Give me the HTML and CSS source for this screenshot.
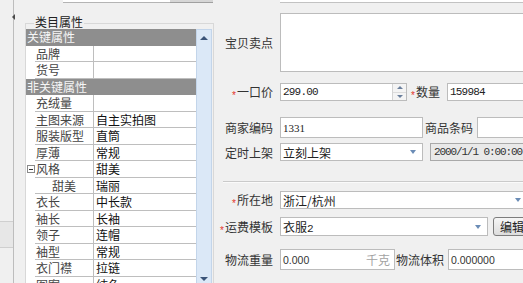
FILE: index.html
```html
<!DOCTYPE html>
<html lang="zh-CN">
<head>
<meta charset="utf-8">
<title>类目属性</title>
<link rel="stylesheet" href="styles.css">
</head>
<body>
<div class="app">
  <div class="left">
    <div class="strip">
      <span class="splitter-arrow"></span>
      <div class="strip-cell"></div>
    </div>
    <div class="leftmain">
      <div class="topbox"><div class="tb-a"></div><div class="tb-b"></div></div>
      <div class="group">
        <div class="legend">类目属性</div>
        <div class="grid">
          <div class="rows">
            <div class="row head">关键属性</div>
            <div class="row"><span class="ind"></span><span class="name">品牌</span><span class="val"></span></div>
            <div class="row"><span class="ind"></span><span class="name">货号</span><span class="val"></span></div>
            <div class="row head">非关键属性</div>
            <div class="row"><span class="ind"></span><span class="name">充绒量</span><span class="val"></span></div>
            <div class="row"><span class="ind"></span><span class="name">主图来源</span><span class="val">自主实拍图</span></div>
            <div class="row"><span class="ind"></span><span class="name">服装版型</span><span class="val">直筒</span></div>
            <div class="row"><span class="ind"></span><span class="name">厚薄</span><span class="val">常规</span></div>
            <div class="row"><span class="ind"><span class="toggle"></span></span><span class="name">风格</span><span class="val">甜美</span></div>
            <div class="row child"><span class="ind"></span><span class="name">甜美</span><span class="val">瑞丽</span></div>
            <div class="row"><span class="ind"></span><span class="name">衣长</span><span class="val">中长款</span></div>
            <div class="row"><span class="ind"></span><span class="name">袖长</span><span class="val">长袖</span></div>
            <div class="row"><span class="ind"></span><span class="name">领子</span><span class="val">连帽</span></div>
            <div class="row"><span class="ind"></span><span class="name">袖型</span><span class="val">常规</span></div>
            <div class="row"><span class="ind"></span><span class="name">衣门襟</span><span class="val">拉链</span></div>
            <div class="row"><span class="ind"></span><span class="name">图案</span><span class="val">纯色</span></div>
          </div>
          <div class="vscroll">
            <div class="sbtn"><span class="tri-up"></span></div>
            <div class="track"></div>
            <div class="sbtn"><span class="tri-down"></span></div>
          </div>
        </div>
      </div>
    </div>
  </div>

  <div class="form">
    <div class="f-top"></div>

    <div class="frow r-desc">
      <span class="lab">宝贝卖点</span>
      <div class="box area"></div>
    </div>

    <div class="frow r-price">
      <span class="lab"><span class="req">*</span>一口价</span>
      <div class="box num"><span class="mono">299.00</span>
        <span class="spin"><span class="spin-h"><span class="sm-up"></span></span><span class="spin-h"><span class="sm-down"></span></span></span>
      </div>
      <span class="lab2 w-qty"><span class="req">*</span>数量</span>
      <div class="box w-qtyin"><span class="mono">159984</span></div>
    </div>

    <div class="frow r-code">
      <span class="lab">商家编码</span>
      <div class="box w-code"><span class="serif">1331</span></div>
      <span class="lab2 w-bar">商品条码</span>
      <div class="box w-barin"></div>
    </div>

    <div class="frow r-time">
      <span class="lab">定时上架</span>
      <div class="box combo w-code"><span>立刻上架</span><span class="arrow"></span></div>
      <div class="box date"><span class="mono small">2000/1/1 0:00:00</span></div>
    </div>

    <div class="sep"></div>

    <div class="frow r-loc">
      <span class="lab"><span class="req">*</span>所在地</span>
      <div class="box combo w-loc"><span>浙江/杭州</span><span class="arrow"></span></div>
    </div>

    <div class="frow r-ship">
      <span class="lab"><span class="req">*</span>运费模板</span>
      <div class="box combo w-ship"><span>衣服<span class="mono">2</span></span><span class="arrow"></span></div>
      <div class="btn">编辑</div>
    </div>

    <div class="frow r-logi">
      <span class="lab">物流重量</span>
      <div class="box w-wt"><span class="sans">0.000</span><span class="unit">千克</span></div>
      <span class="lab2 w-vol">物流体积</span>
      <div class="box w-volin"><span class="sans">0.000000</span></div>
    </div>
  </div>
</div>
</body>
</html>
```

FILE: styles.css
```css
* { box-sizing: border-box; }
html, body { margin: 0; padding: 0; }
body {
  width: 523px;
  height: 283px;
  overflow: hidden;
  background: #f0f0f0;
  font-family: "Noto Sans CJK SC", "Microsoft YaHei", sans-serif;
  font-size: 12px;
  color: #333;
}
.app { display: flex; width: 640px; height: 283px; }

/* ---------- left panel ---------- */
.left { width: 216px; flex: none; display: flex; }
.strip {
  width: 14px;
  flex: none;
  border-right: 1px solid #bdbdbd;
  padding-top: 14px;
}
.splitter-arrow {
  display: block;
  width: 0; height: 0;
  margin-left: 12px;
  border-right: 3px solid #4a4a4a;
  border-top: 3px solid transparent;
  border-bottom: 3px solid transparent;
}
.strip-cell {
  margin-top: 201px;
  height: 27px;
  background: #e7e7e7;
  border-top: 1px solid #cfcfcf;
  border-bottom: 1px solid #cfcfcf;
}
.leftmain { flex: 1; padding-left: 11px; }
.topbox { display: flex; margin-left: 38px; width: 150px; height: 3px; }
.tb-a { flex: 1; background: #fff; border-bottom: 1px solid #b4b4b4; }
.tb-b { width: 43px; background: #d6d6d6; border-bottom: 1px solid #a0a0a0; }

.group {
  margin-top: 20px;
  width: 189px;
  height: 272px;
  border: 1px solid #d8d8d8;
  border-bottom: none;
}
.legend {
  width: fit-content;
  margin: -9px 0 0 8px;
  padding: 0 1px;
  height: 14px;
  line-height: 14px;
  background: #f0f0f0;
  color: #222;
}
.grid { display: flex; align-items: flex-start; width: 186px; }
.rows { width: 170px; background: #fff; }
.row { display: flex; height: 16.5px; line-height: 15px; white-space: nowrap; }
.row.head { background: #8e8e8e; color: #f6f6f6; padding-left: 1px; }
.ind {
  width: 9px; flex: none;
  display: flex; align-items: center;
  padding-left: 1px;
}
.toggle {
  width: 8px; height: 8px;
  border: 1px solid #8a8a8a;
  background: #fff;
  display: flex; align-items: center; justify-content: center;
}
.toggle::after { content: ""; width: 4px; height: 1px; background: #333; }
.name {
  width: 58px; flex: none;
  border-bottom: 1px solid #bebebe;
  padding-left: 1px;
  color: #444;
}
.child .name { padding-left: 17px; }
.val {
  flex: 1;
  border-left: 1px solid #bebebe;
  border-bottom: 1px solid #bebebe;
  padding-left: 2px;
  color: #111;
}
.vscroll {
  width: 16px;
  height: 258px;
  display: flex;
  flex-direction: column;
  background: #dbe8f7;
  border: 1px solid #c3d5ea;
}
.sbtn { height: 15px; display: flex; align-items: center; justify-content: center; }
.track { flex: 1; }
.tri-up { width: 0; height: 0; border-left: 4px solid transparent; border-right: 4px solid transparent; border-bottom: 4px solid #3b5479; }
.tri-down { width: 0; height: 0; border-left: 4px solid transparent; border-right: 4px solid transparent; border-top: 4px solid #3b5479; }

/* ---------- form ---------- */
.form { flex: none; width: 330px; display: flex; flex-direction: column; }
.f-top { margin-left: 64px; width: 266px; height: 3px; background: #fff; border-bottom: 1px solid #c2c2c2; }
.frow { display: flex; align-items: center; flex: none; }
.lab {
  width: 57px; margin-right: 7px; flex: none;
  text-align: right; white-space: nowrap; color: #333;
}
.lab2 { flex: none; text-align: right; white-space: nowrap; color: #333; }
.req { color: #e3342c; font-family: "Liberation Sans", sans-serif; font-size: 10px; vertical-align: -2px; margin-right: 1px; }
.box {
  flex: none;
  height: 100%;
  background: #fff;
  border: 1px solid #bcbcbc;
  display: flex; align-items: center;
  padding-left: 2px;
  color: #222;
  white-space: nowrap;
}
.mono { font-family: "Liberation Mono", monospace; font-size: 11px; letter-spacing: -0.8px; color: #222; }
.mono.small { font-size: 11px; letter-spacing: -1.1px; color: #333; }
.serif { font-family: "Liberation Serif", serif; font-size: 11px; color: #222; }
.sans { font-family: "Liberation Sans", sans-serif; font-size: 10.5px; color: #333; }

.r-desc { margin-top: 10px; height: 59px; }
.area { width: 252px; }

.r-price { margin-top: 11px; height: 18px; }
.num { width: 127px; padding-right: 0; }
.spin {
  margin-left: auto;
  width: 14px; height: 100%;
  display: flex; flex-direction: column;
  border-left: 1px solid #d4d4d4;
  background: #f4f4f4;
}
.spin-h { flex: 1; display: flex; align-items: center; justify-content: center; }
.spin-h + .spin-h { border-top: 1px solid #dcdcdc; }
.sm-up { width: 0; height: 0; border-left: 3px solid transparent; border-right: 3px solid transparent; border-bottom: 3px solid #6a7f9c; }
.sm-down { width: 0; height: 0; border-left: 3px solid transparent; border-right: 3px solid transparent; border-top: 3px solid #6a7f9c; }
.w-qty { width: 33px; margin-right: 7px; }
.w-qtyin { width: 80px; }

.r-code { margin-top: 16px; height: 21px; }
.w-code { width: 143px; }
.w-bar { width: 50px; margin-right: 4px; }
.w-barin { width: 60px; }

.r-time { margin-top: 5px; height: 18px; }
.combo { padding-right: 6px; }
.arrow {
  margin-left: auto;
  width: 0; height: 0;
  border-left: 3.5px solid transparent;
  border-right: 3.5px solid transparent;
  border-top: 4px solid #6b8cb6;
}
.date { width: 100px; margin-left: 7px; background: #e9e9e9; border-color: #a9a9a9; padding-left: 3px; }

.sep { margin-top: 20px; margin-left: 7px; width: 320px; height: 2px; border-top: 1px solid #cacaca; border-bottom: 1px solid #fafafa; flex: none; }

.r-loc { margin-top: 8px; height: 18px; }
.w-loc { width: 248px; }

.r-ship { margin-top: 8px; height: 19px; }
.w-ship { width: 208px; }
.btn {
  flex: none;
  margin-left: 5px;
  width: 42px; height: 100%;
  border: 1px solid #7d7d7d;
  border-radius: 3px;
  background: linear-gradient(#f6f6f6, #dddddd);
  padding-left: 6px;
  line-height: 17px;
  color: #222;
}

.r-logi { margin-top: 13px; height: 21px; }
.w-wt { width: 115px; padding-right: 4px; }
.unit { margin-left: auto; color: #a3a3a3; }
.w-vol { width: 49px; margin-right: 4px; }
.w-volin { width: 80px; }
```
